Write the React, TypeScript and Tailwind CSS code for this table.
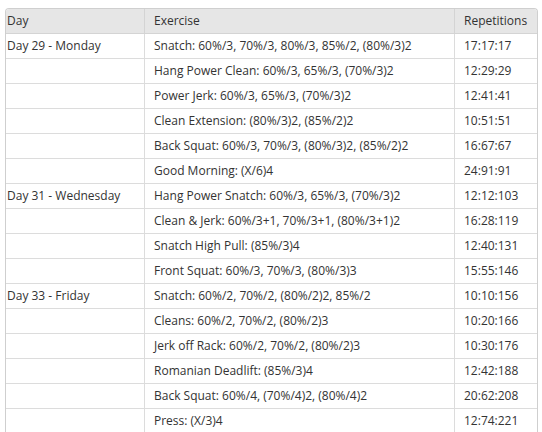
const days = [
  {
    day: "Day 29 - Monday",
    rows: [
      ["Snatch: 60%/3, 70%/3, 80%/3, 85%/2, (80%/3)2", "17:17:17"],
      ["Hang Power Clean: 60%/3, 65%/3, (70%/3)2", "12:29:29"],
      ["Power Jerk: 60%/3, 65%/3, (70%/3)2", "12:41:41"],
      ["Clean Extension: (80%/3)2, (85%/2)2", "10:51:51"],
      ["Back Squat: 60%/3, 70%/3, (80%/3)2, (85%/2)2", "16:67:67"],
      ["Good Morning: (X/6)4", "24:91:91"],
    ],
  },
  {
    day: "Day 31 - Wednesday",
    rows: [
      ["Hang Power Snatch: 60%/3, 65%/3, (70%/3)2", "12:12:103"],
      ["Clean & Jerk: 60%/3+1, 70%/3+1, (80%/3+1)2", "16:28:119"],
      ["Snatch High Pull: (85%/3)4", "12:40:131"],
      ["Front Squat: 60%/3, 70%/3, (80%/3)3", "15:55:146"],
    ],
  },
  {
    day: "Day 33 - Friday",
    rows: [
      ["Snatch: 60%/2, 70%/2, (80%/2)2, 85%/2", "10:10:156"],
      ["Cleans: 60%/2, 70%/2, (80%/2)3", "10:20:166"],
      ["Jerk off Rack: 60%/2, 70%/2, (80%/2)3", "10:30:176"],
      ["Romanian Deadlift: (85%/3)4", "12:42:188"],
      ["Back Squat: 60%/4, (70%/4)2, (80%/4)2", "20:62:208"],
      ["Press: (X/3)4", "12:74:221"],
    ],
  },
];

export default function App() {
  return (
    <div className="min-h-screen bg-white pl-[5px] pt-[8px] font-['Open_Sans',sans-serif] text-[12px] text-[#333]">
      <div className="w-[533px] overflow-hidden rounded-t-[4px] border border-b-0 border-[#cfcfcf]">
        <div className="grid h-[25px] grid-cols-[139px_310px_1fr] border-b border-[#d4d4d4] bg-[#e6e6e6]">
          <div className="flex items-center border-r border-[#d4d4d4] pl-[1px]">Day</div>
          <div className="flex items-center border-r border-[#d4d4d4] pl-[9px]">Exercise</div>
          <div className="flex items-center pl-[9px]">Repetitions</div>
        </div>
        {days.map((d) =>
          d.rows.map(([ex, reps], i) => (
            <div key={d.day + i} className="grid h-[25px] grid-cols-[139px_310px_1fr] border-b border-[#dcdcdc]">
              <div className="flex items-center border-r border-[#dcdcdc] pl-[1px]">{i === 0 ? d.day : ""}</div>
              <div className="flex items-center border-r border-[#dcdcdc] pl-[9px]">{ex}</div>
              <div className="flex items-center pl-[9px]">{reps}</div>
            </div>
          ))
        )}
      </div>
    </div>
  );
}
